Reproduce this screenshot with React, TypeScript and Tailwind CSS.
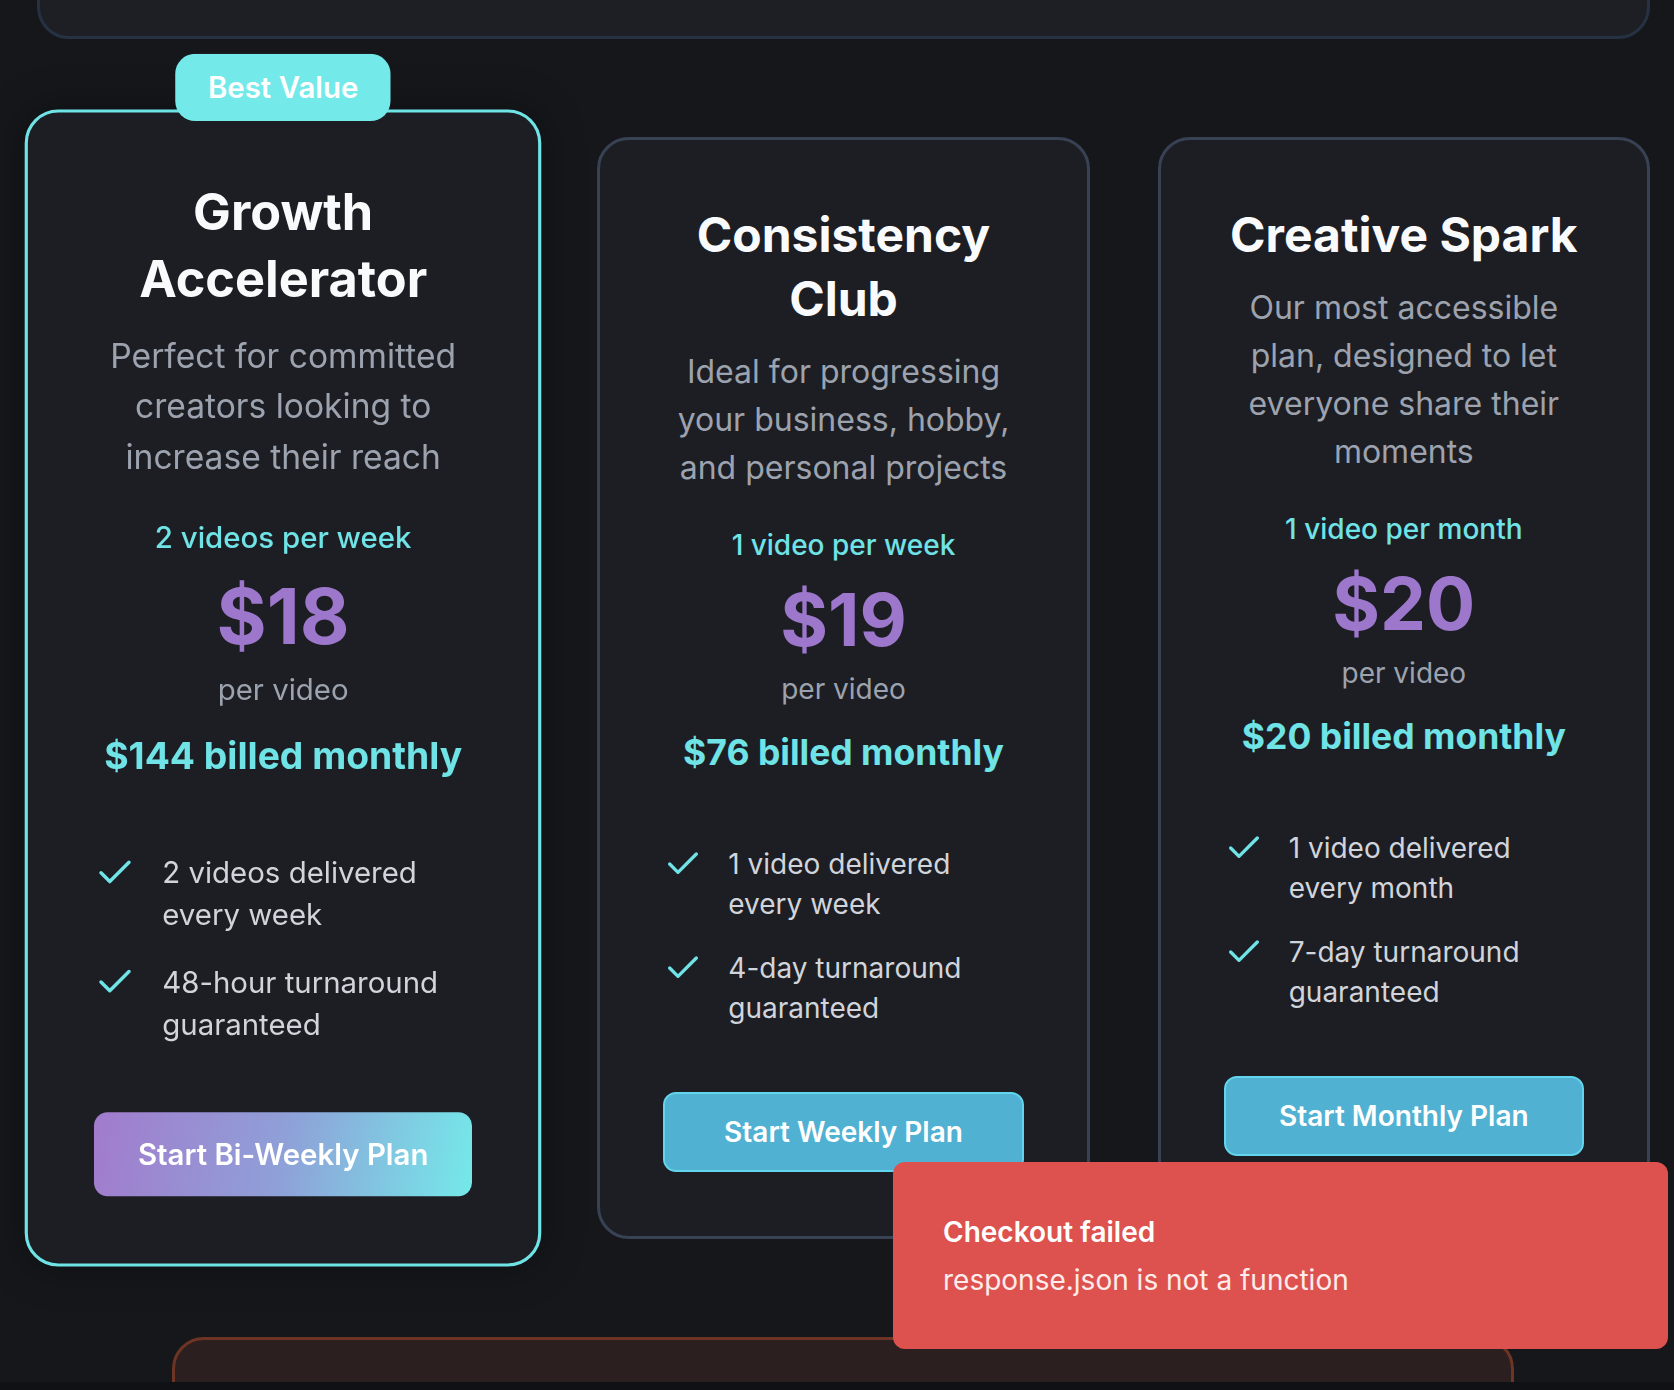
import { Check } from "lucide-react";

type Plan = {
  name: string;
  desc: string;
  cadence: string;
  price: string;
  billed: string;
  features: string[];
  cta: string;
  featured?: boolean;
};

const plans: Plan[] = [
  {
    name: "Growth Accelerator",
    desc: "Perfect for committed creators looking to increase their reach",
    cadence: "2 videos per week",
    price: "$18",
    billed: "$144 billed monthly",
    features: ["2 videos delivered every week", "48-hour turnaround guaranteed"],
    cta: "Start Bi-Weekly Plan",
    featured: true,
  },
  {
    name: "Consistency Club",
    desc: "Ideal for progressing your business, hobby, and personal projects",
    cadence: "1 video per week",
    price: "$19",
    billed: "$76 billed monthly",
    features: ["1 video delivered every week", "4-day turnaround guaranteed"],
    cta: "Start Weekly Plan",
  },
  {
    name: "Creative Spark",
    desc: "Our most accessible plan, designed to let everyone share their moments",
    cadence: "1 video per month",
    price: "$20",
    billed: "$20 billed monthly",
    features: ["1 video delivered every month", "7-day turnaround guaranteed"],
    cta: "Start Monthly Plan",
  },
];

function PlanCard({ plan }: { plan: Plan }) {
  return (
    <div
      className={
        plan.featured
          ? "relative scale-105 rounded-[32px] border-3 border-[#6fe4e6] bg-[#1d1e23] shadow-[0_0_40px_rgba(0,0,0,0.35)]"
          : "relative rounded-[32px] border-3 border-[#394254] bg-[#1d1e23]"
      }
    >
      {plan.featured && (
        <div className="absolute left-1/2 top-[-56px] -translate-x-1/2 h-[64px] px-[31px] rounded-[19px] bg-[#73e9e9] text-[28px] leading-[64px] font-semibold text-white whitespace-nowrap">
          Best Value
        </div>
      )}
      <div className="flex flex-col items-center px-[63px] pt-[63px] pb-[64px] text-center">
        <h2 className="text-[48px] leading-[64px] font-bold text-[#f9fafb]">{plan.name}</h2>
        <p className="mt-[17px] text-[32px] leading-[48px] text-[#9ca3af]">{plan.desc}</p>
        <p className="mt-[33px] text-[28px] leading-[40px] font-medium text-[#6fe3e6]">{plan.cadence}</p>
        <p className="mt-[18px] text-[73px] leading-none font-bold text-[#9d77cc]">{plan.price}</p>
        <p className="mt-[13px] text-[28px] leading-[40px] text-[#9ca3af]">per video</p>
        <p className="mt-[20px] text-[35.5px] leading-[48px] font-bold text-[#6fe3e6]">{plan.billed}</p>

        <ul className="mt-[67px] w-full flex flex-col gap-[24px] text-left">
          {plan.features.map((f) => (
            <li key={f} className="flex items-start gap-[25px]">
              <Check size={40} strokeWidth={2} className="shrink-0 text-[#6fe3e6]" />
              <span className="max-w-[280px] text-[28px] leading-[40px] text-[#d1d5db]">{f}</span>
            </li>
          ))}
        </ul>

        <button
          className={
            plan.featured
              ? "mt-[64px] w-full h-[80px] rounded-[13px] bg-[linear-gradient(100deg,#a27bcd_0%,#8fa0d8_50%,#74e9e9_100%)] text-[28px] font-semibold text-white"
              : "mt-[64px] w-full h-[80px] rounded-[13px] border-2 border-[#62d4ec] bg-[#51b1d2] text-[28px] font-semibold text-white"
          }
        >
          {plan.cta}
        </button>
      </div>
    </div>
  );
}

export default function App() {
  return (
    <div className="relative h-[1390px] overflow-hidden bg-[#16171b] font-['Inter','Noto_Sans',sans-serif]">
      <div className="h-[1382px] overflow-hidden">
        {/* panel above, cut off by the top edge */}
        <div className="ml-[37px] w-[1613px] h-[120px] -mt-[81px] rounded-[32px] border-3 border-[#263244] bg-[#1e1f25]" />

        <div className="ml-[37px] w-[1613px] mt-[98px] grid grid-cols-3 gap-[68px] items-start">
          {plans.map((p) => (
            <PlanCard key={p.name} plan={p} />
          ))}
        </div>

        {/* next section peeking in at the bottom */}
        <div className="ml-[172px] mt-[98px] w-[1342px] h-[200px] rounded-t-[32px] border-3 border-[#6e3424] bg-[#2c1f20]" />
      </div>
      <div className="h-[8px] bg-[#101115]" />

      {/* toast */}
      <div className="absolute right-[6px] bottom-[41px] w-[775px] h-[187px] rounded-[12px] bg-[#dd524e] pl-[50px] flex flex-col justify-center">
        <p className="text-[28px] leading-[40px] font-semibold text-white">Checkout failed</p>
        <p className="mt-[8px] text-[28px] leading-[40px] text-[#fdeceb]">response.json is not a function</p>
      </div>
    </div>
  );
}
